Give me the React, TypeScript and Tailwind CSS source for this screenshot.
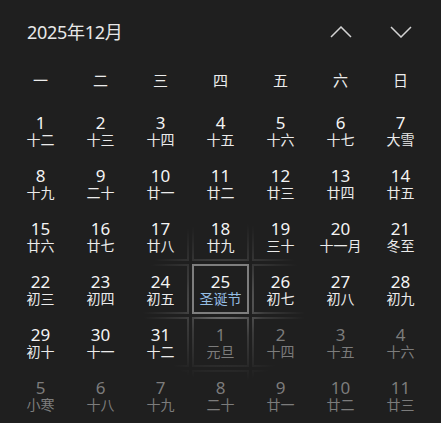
import React from "react";

type Day = { n: number; lunar: string; other?: boolean; holiday?: boolean; hover?: boolean };

const rows: Day[][] = [
  [
    { n: 1, lunar: "十二" }, { n: 2, lunar: "十三" }, { n: 3, lunar: "十四" }, { n: 4, lunar: "十五" },
    { n: 5, lunar: "十六" }, { n: 6, lunar: "十七" }, { n: 7, lunar: "大雪" },
  ],
  [
    { n: 8, lunar: "十九" }, { n: 9, lunar: "二十" }, { n: 10, lunar: "廿一" }, { n: 11, lunar: "廿二" },
    { n: 12, lunar: "廿三" }, { n: 13, lunar: "廿四" }, { n: 14, lunar: "廿五" },
  ],
  [
    { n: 15, lunar: "廿六" }, { n: 16, lunar: "廿七" }, { n: 17, lunar: "廿八" }, { n: 18, lunar: "廿九" },
    { n: 19, lunar: "三十" }, { n: 20, lunar: "十一月" }, { n: 21, lunar: "冬至" },
  ],
  [
    { n: 22, lunar: "初三" }, { n: 23, lunar: "初四" }, { n: 24, lunar: "初五" },
    { n: 25, lunar: "圣诞节", holiday: true, hover: true },
    { n: 26, lunar: "初七" }, { n: 27, lunar: "初八" }, { n: 28, lunar: "初九" },
  ],
  [
    { n: 29, lunar: "初十" }, { n: 30, lunar: "十一" }, { n: 31, lunar: "十二" },
    { n: 1, lunar: "元旦", other: true }, { n: 2, lunar: "十四", other: true },
    { n: 3, lunar: "十五", other: true }, { n: 4, lunar: "十六", other: true },
  ],
  [
    { n: 5, lunar: "小寒", other: true }, { n: 6, lunar: "十八", other: true }, { n: 7, lunar: "十九", other: true },
    { n: 8, lunar: "二十", other: true }, { n: 9, lunar: "廿一", other: true }, { n: 10, lunar: "廿二", other: true },
    { n: 11, lunar: "廿三", other: true },
  ],
];

const weekdays = ["一", "二", "三", "四", "五", "六", "日"];

function Chevron({ up }: { up?: boolean }) {
  return (
    <svg width="22" height="12" viewBox="0 0 22 12" fill="none">
      <path
        d={up ? "M1 11 L11 1 L21 11" : "M1 1 L11 11 L21 1"}
        stroke="#d4d4d4"
        strokeWidth="1.5"
      />
    </svg>
  );
}

export default function App() {
  return (
    <div
      className="w-[441px] h-[423px] overflow-hidden bg-[#1f1f1f] px-[12px] text-white"
      style={{ fontFamily: '"Noto Sans", "Noto Sans CJK SC", sans-serif' }}
    >
      {/* Header */}
      <div className="h-[64px] flex items-center justify-between">
        <span className="pl-[15px] text-[18px] text-[#e8e8e8] tracking-[-0.3px]">2025年12月</span>
        <div className="flex gap-[3px]">
          <button className="w-[57px] h-[40px] flex items-center justify-center">
            <Chevron up />
          </button>
          <button className="w-[57px] h-[40px] flex items-center justify-center">
            <Chevron />
          </button>
        </div>
      </div>

      {/* Weekdays */}
      <div className="grid grid-cols-7 gap-[3px] h-[32px] items-center">
        {weekdays.map((w) => (
          <div key={w} className="text-center text-[15px] text-[#ececec]">{w}</div>
        ))}
      </div>

      {/* Days */}
      <div className="mt-[9px] grid grid-cols-7 gap-[3px]">
        {rows.flat().map((d, i) => (
          <div
            key={i}
            className={`h-[50px] p-[2px] ${
              d.hover
                ? "bg-[#7e7e7e]"
                : "bg-fixed bg-[radial-gradient(circle_at_224px_302px,rgba(255,255,255,0.45),rgba(255,255,255,0.12)_42px,transparent_82px)]"
            }`}
          >
            <div className="w-full h-full bg-[#1f1f1f] flex flex-col items-center justify-center pt-[1px]">
              <div
                className={`text-[17px] leading-[18px] h-[18px] ${d.other ? "text-[#7c7c7c]" : "text-[#f4f4f4]"}`}
              >
                {d.n}
              </div>
              <div
                className={`text-[14px] leading-[16px] h-[16px] ${
                  d.holiday ? "text-[#95bde3]" : d.other ? "text-[#7c7c7c]" : "text-[#ebebeb]"
                }`}
              >
                {d.lunar}
              </div>
            </div>
          </div>
        ))}
      </div>
    </div>
  );
}
